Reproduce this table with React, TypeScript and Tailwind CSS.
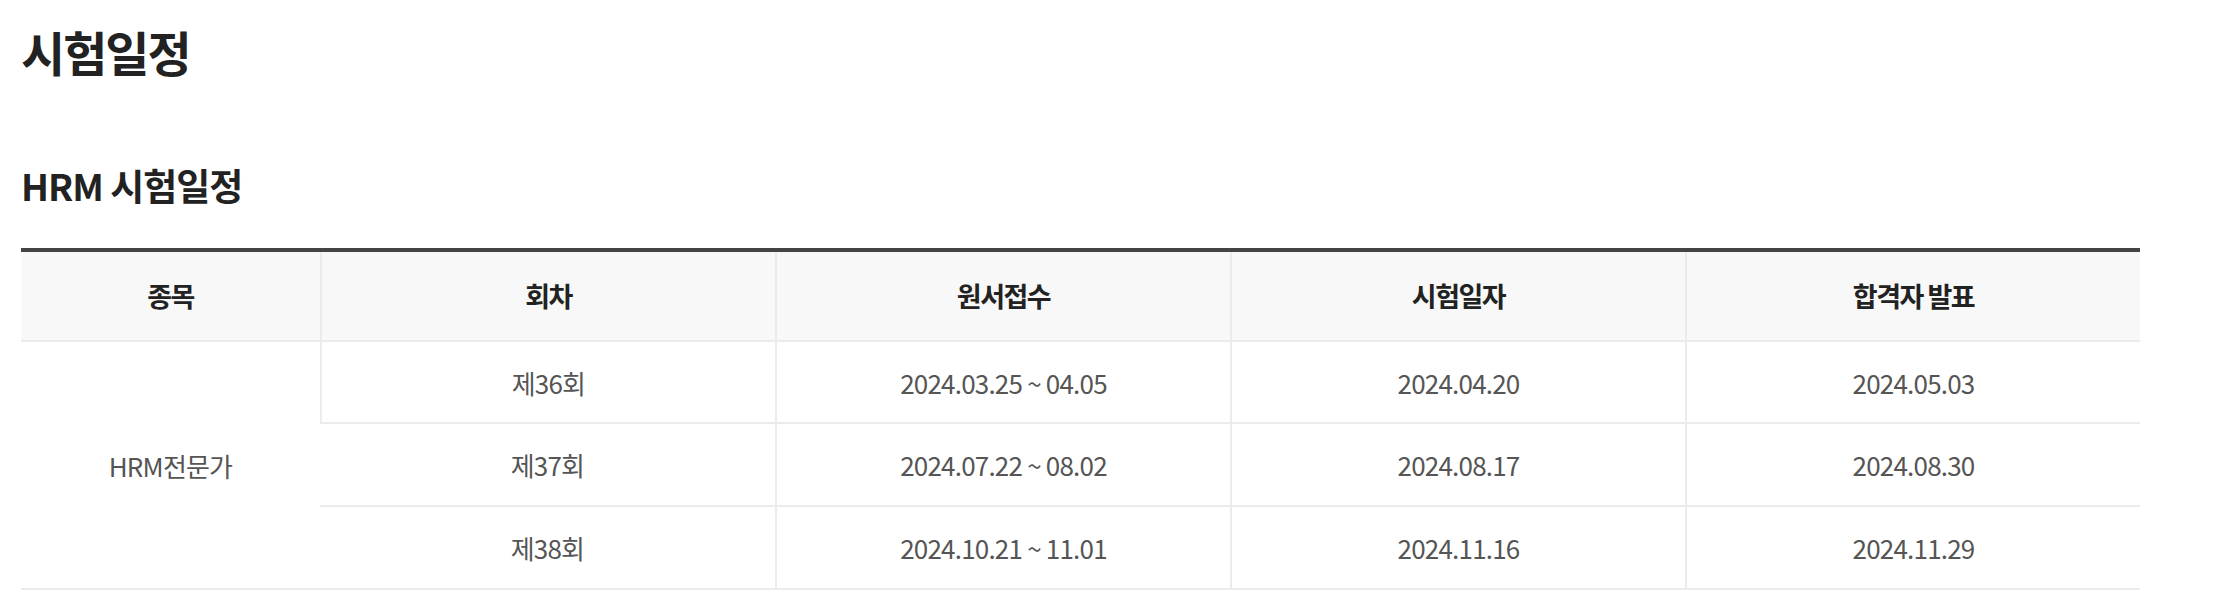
const rounds = [
    { round: "제36회", apply: "2024.03.25 ~ 04.05", exam: "2024.04.20", result: "2024.05.03" },
    { round: "제37회", apply: "2024.07.22 ~ 08.02", exam: "2024.08.17", result: "2024.08.30" },
    { round: "제38회", apply: "2024.10.21 ~ 11.01", exam: "2024.11.16", result: "2024.11.29" }
];

const headers = ["종목", "회차", "원서접수", "시험일자", "합격자 발표"];

const base = "flex items-center justify-center border-b-2 border-[#ebebeb] text-[26px] text-[#555] tracking-[-0.8px]";
const cell = `${base} border-l-2`;

export default function App() {
    return (
        <div className="min-h-screen bg-white pl-[21px] pt-[18px] font-['Noto_Sans_CJK_KR','Noto_Sans',sans-serif]">
            <h1 className="text-[48px] leading-[66px] font-bold text-[#222] tracking-[-2px]">시험일정</h1>

            <h2 className="mt-[76px] text-[37px] leading-[50px] font-semibold text-[#222] tracking-[-1px]">
                HRM 시험일정
            </h2>

            <div className="mt-[38px] w-[2119px] border-t-4 border-[#444] grid grid-cols-[299px_1fr_1fr_1fr_1fr] grid-rows-[90px_82px_83px_83px]">
                {headers.map((h, i) => (
                    <div
                        key={h}
                        className={`flex items-center justify-center bg-[#f8f8f8] border-b-2 border-[#ebebeb] text-[27px] font-bold text-[#222] tracking-[-1.5px] ${i > 0 ? "border-l-2" : ""}`}
                    >
                        {h}
                    </div>
                ))}

                <div className={`${base} row-span-3`}>HRM전문가</div>

                {rounds.map((r, i) => (
                    <div key={r.round} className="contents">
                        {/* only the first round row keeps the divider next to the merged cell */}
                        <div className={i === 0 ? cell : base}>{r.round}</div>
                        <div className={cell}>{r.apply}</div>
                        <div className={cell}>{r.exam}</div>
                        <div className={cell}>{r.result}</div>
                    </div>
                ))}
            </div>
        </div>
    );
}
